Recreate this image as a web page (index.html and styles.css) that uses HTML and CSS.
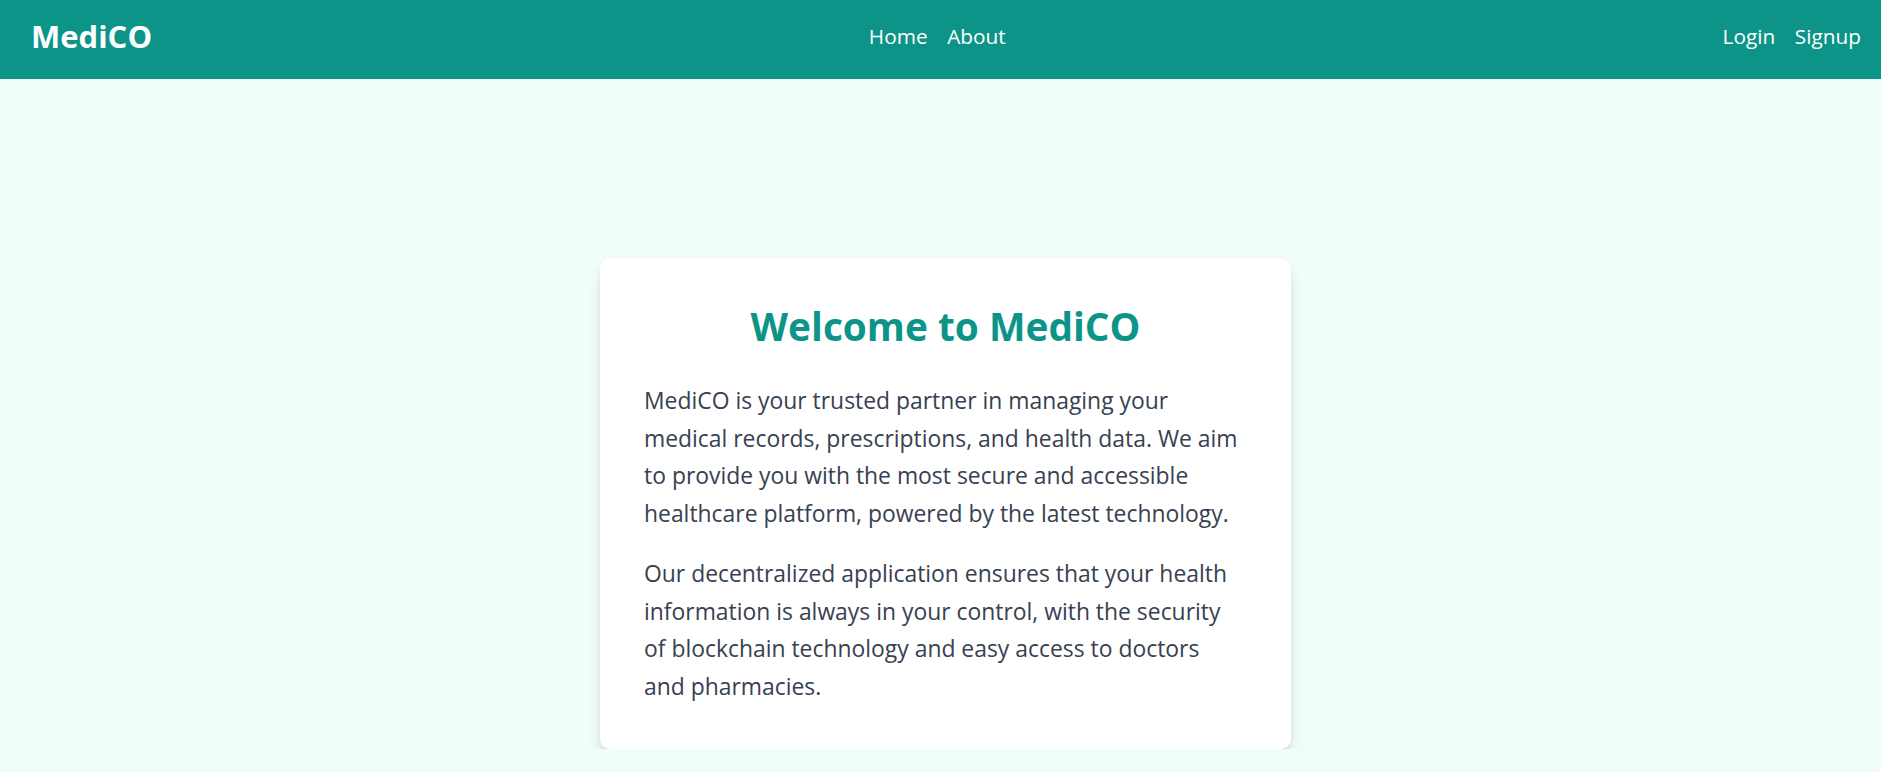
FILE: index.html
```html
<!DOCTYPE html>
<html lang="en">
<head>
<meta charset="utf-8">
<title>MediCO</title>
<link rel="stylesheet" href="styles.css">
</head>
<body>
<header class="topbar">
  <a class="brand" href="#">MediCO</a>
  <nav class="nav">
    <a class="nav-link" href="#">Home</a>
    <a class="nav-link" href="#">About</a>
  </nav>
  <div class="nav">
    <a class="nav-link" href="#">Login</a>
    <a class="nav-link" href="#">Signup</a>
  </div>
</header>
<main class="main">
  <section class="card">
    <h1 class="card-title">Welcome to MediCO</h1>
    <p class="card-text">MediCO is your trusted partner in managing your medical records, prescriptions, and health data. We aim to provide you with the most secure and accessible healthcare platform, powered by the latest technology.</p>
    <p class="card-text">Our decentralized application ensures that your health information is always in your control, with the security of blockchain technology and easy access to doctors and pharmacies.</p>
  </section>
</main>
</body>
</html>
```
FILE: styles.css
```css
* { box-sizing: border-box; }

html, body {
  margin: 0;
  padding: 0;
}

body {
  background: #f0fdfa;
  font-family: "Open Sans", "Noto Sans", sans-serif;
  color: #374151;
}

a {
  color: inherit;
  text-decoration: none;
}

.topbar {
  height: 79px;
  background: #0d9488;
  color: #ffffff;
  display: flex;
  align-items: center;
  justify-content: space-between;
  padding: 0 20px 6.4px 31px;
}

.brand {
  font-size: 31px;
  line-height: 40px;
  font-weight: 700;
}

.nav {
  display: flex;
  gap: 19.6px;
}

.nav-link {
  font-size: 20.8px;
  line-height: 30px;
}

.nav-link.wide {
  letter-spacing: 0.2px;
}

.main {
  display: flex;
  justify-content: center;
  padding: 179px 0 0 10px;
}

.card {
  width: 691px;
  background: #ffffff;
  border-radius: 10px;
  box-shadow: 0 12px 18px -4px rgba(0, 0, 0, 0.14), 0 5px 8px -5px rgba(0, 0, 0, 0.14), 0 0 6px rgba(0, 0, 0, 0.03);
  padding: 44.7px 50px 43.3px 44px;
}

.card-title {
  margin: 0 0 33px 6px;
  text-align: center;
  font-size: 38.8px;
  line-height: 46.56px;
  font-weight: 700;
  color: #0d9488;
}

.card-text {
  margin: 0;
  font-size: 22.9px;
  line-height: 37.6px;
}

.card-text + .card-text {
  margin-top: 22.6px;
}
```
